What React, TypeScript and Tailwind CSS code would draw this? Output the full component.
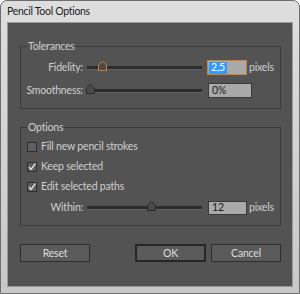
const font = { fontFamily: 'Lato, "Liberation Sans", sans-serif' };

const Thumb = ({ left, focused }: { left: number; focused?: boolean }) => (
  <svg
    width="9"
    height="10"
    viewBox="0 0 9 10"
    className="absolute top-[-5px]"
    style={{ left }}
  >
    <path
      d="M0.5 9.5 V4 L4.5 0.5 L8.5 4 V9.5 Z"
      fill="#4a4a4a"
      stroke={focused ? '#d0802e' : '#2a2a2a'}
      strokeWidth="1"
    />
  </svg>
);

const Slider = ({ thumb, focused }: { thumb: number; focused?: boolean }) => (
  <div className="relative w-[115px] h-[4px] bg-[#2c2c2c] border-b border-[#626262]">
    <Thumb left={thumb} focused={focused} />
  </div>
);

const Checkbox = ({ checked, label }: { checked?: boolean; label: string }) => (
  <div className="flex items-center h-[14px] pl-[6px] gap-[4px]">
    <div className="w-[10px] h-[10px] border border-[#2e2e2e] bg-[#5f5f5f] flex items-center justify-center">
      {checked && (
        <svg width="8" height="8" viewBox="0 0 8 8">
          <path d="M1 4 L3 6.5 L7.5 0.5" fill="none" stroke="#e4e4e4" strokeWidth="1.3" />
        </svg>
      )}
    </div>
    <span>{label}</span>
  </div>
);

const Button = ({ label, primary }: { label: string; primary?: boolean }) => (
  <button
    className={
      'h-[18px] bg-[#5a5a5a] text-[#dcdcdc] text-[10.5px] leading-none ' +
      (primary ? 'w-[71px] border-2 border-[#262626]' : 'w-[70px] border border-[#2e2e2e]')
    }
  >
    {label}
  </button>
);

export default function App() {
  return (
    <div
      className="w-[300px] h-[294px] flex flex-col rounded-t-[7px] border border-[#6e6e6e] bg-gradient-to-b from-[#dedede] to-[#c8c8c8] px-[6px] pb-[6px]"
      style={font}
    >
      <div className="h-[21px] flex items-center text-[10.5px] tracking-[-0.3px] text-[#1c1c1c]">Pencil Tool Options</div>
      <div className="flex-1 border border-[#9a9a9a] bg-[#535353] pl-[12px] pr-[11px] pt-[17px] text-[10.5px] tracking-[-0.2px] text-[#cfcfcf]">
        <fieldset className="border border-[#3a3a3a] pb-[10px]">
          <legend className="ml-[6px] px-[1px] leading-[13px]">Tolerances</legend>
          <div className="flex flex-col gap-[8px] pt-[7px]">
            <div className="flex items-center h-[15px]">
              <span className="w-[62px] text-right">Fidelity:</span>
              <div className="ml-[4px]">
                <Slider thumb={11} focused />
              </div>
              <div className="ml-[5px] w-[40px] h-[15px] border border-[#d0802e] bg-[#a9a9a9] flex items-center pl-[1px]">
                <span className="bg-[#3399ff] text-white leading-[11px] py-[0.5px] px-[2px]">2,5</span>
              </div>
              <span className="ml-[2px]">pixels</span>
            </div>
            <div className="flex items-center h-[15px]">
              <span className="w-[62px] text-right">Smoothness:</span>
              <div className="ml-[4px]">
                <Slider thumb={-1} />
              </div>
              <div className="ml-[6px] w-[44px] h-[15px] border border-[#3a3a3a] bg-[#a9a9a9] flex items-center pl-[3px] text-[#1c1c1c]">
                0%
              </div>
            </div>
          </div>
        </fieldset>

        <fieldset className="border border-[#3a3a3a] mt-[12px] pb-[10px]">
          <legend className="ml-[6px] px-[1px] leading-[13px]">Options</legend>
          <div className="flex flex-col gap-[6px] pt-[6px]">
            <Checkbox label="Fill new pencil strokes" />
            <Checkbox checked label="Keep selected" />
            <Checkbox checked label="Edit selected paths" />
          </div>
          <div className="flex items-center h-[14px] mt-[7px]">
            <span className="w-[62px] text-right">Within:</span>
            <div className="ml-[4px]">
              <Slider thumb={60} />
            </div>
            <div className="ml-[6px] w-[39px] h-[14px] border border-[#3a3a3a] bg-[#a9a9a9] flex items-center pl-[3px] text-[#1c1c1c]">
              12
            </div>
            <span className="ml-[2px]">pixels</span>
          </div>
        </fieldset>

        <div className="flex justify-between mt-[18px]">
          <Button label="Reset" />
          <div className="flex gap-[5px]">
            <Button label="OK" primary />
            <Button label="Cancel" />
          </div>
        </div>
      </div>
    </div>
  );
}
